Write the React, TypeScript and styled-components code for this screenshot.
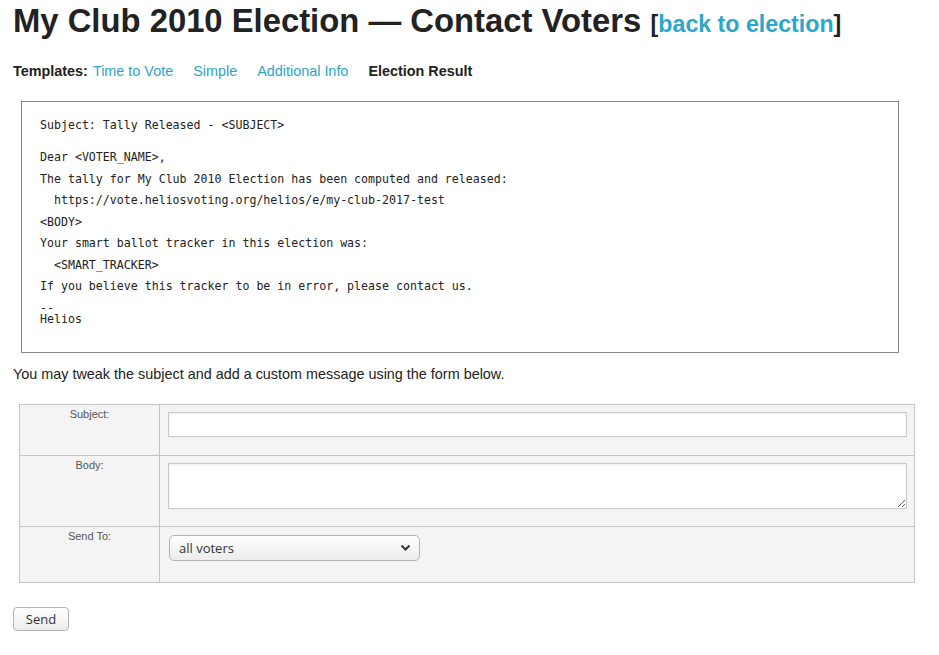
import React from "react";
import styled, { createGlobalStyle } from "styled-components";

const Global = createGlobalStyle`
  html, body { margin: 0; padding: 0; background: #fff; }
  body { font-family: "Liberation Sans", Arial, sans-serif; color: #222; }
`;

const Page = styled.div`
  padding: 0 0 0 13px;
  width: 926px;
  box-sizing: border-box;
`;

const Title = styled.h1`
  margin: 0;
  padding-top: 2px;
  height: 42px;
  font-size: 32.8px;
  line-height: 38px;
  font-weight: bold;
  color: #222;
  white-space: nowrap;
`;

const Back = styled.span`
  font-size: 23.2px;
  margin-left: 3px;
`;

const Link = styled.a`
  color: #2ba6cb;
  text-decoration: none;
`;

const Templates = styled.div`
  display: flex;
  align-items: center;
  gap: 20px;
  margin-top: 19px;
  height: 16px;
  font-size: 14.4px;
  line-height: 16px;
`;

const TplLabel = styled.span`
  display: inline-flex;
  gap: 5px;
`;

const Bold = styled.b`
  font-weight: bold;
  color: #222;
`;

const Preview = styled.pre`
  margin: 22px 0 0 8px;
  width: 878px;
  box-sizing: border-box;
  border: 1px solid #888;
  padding: 18px 18px 28px;
  font-family: "DejaVu Sans Mono", "Liberation Mono", monospace;
  font-size: 11.6px;
  line-height: 10.75px;
  color: #222;
  white-space: pre;
  overflow: hidden;
`;

const Note = styled.p`
  margin: 12px 0 0;
  font-size: 14.4px;
  line-height: 18px;
`;

const Form = styled.div`
  margin: 21px 0 0 6px;
  width: 896px;
  display: grid;
  grid-template-columns: 140px 1fr;
  border: 1px solid #c4c4c4;
  border-bottom: none;
  background: #f4f4f4;
  box-sizing: border-box;
`;

const LabelCell = styled.div<{ $h: number }>`
  height: ${(p) => p.$h}px;
  border-right: 1px solid #c4c4c4;
  border-bottom: 1px solid #c4c4c4;
  text-align: center;
  font-size: 11px;
  color: #555;
  padding-top: 3px;
  box-sizing: border-box;
`;

const FieldCell = styled.div<{ $h: number }>`
  height: ${(p) => p.$h}px;
  border-bottom: 1px solid #c4c4c4;
  padding: 7px 7px 0 8px;
  box-sizing: border-box;
`;

const TextInput = styled.input`
  display: block;
  width: 100%;
  height: 25px;
  box-sizing: border-box;
  border: 1px solid #c8c8c8;
  box-shadow: inset 0 1px 2px rgba(0, 0, 0, 0.08);
  background: #fff;
  margin: 0;
  outline: none;
`;

const TextArea = styled.textarea`
  display: block;
  width: 100%;
  height: 46px;
  box-sizing: border-box;
  border: 1px solid #c8c8c8;
  box-shadow: inset 0 1px 2px rgba(0, 0, 0, 0.08);
  background: #fff;
  margin: 0;
  outline: none;
`;

const SelectWrap = styled.div`
  position: relative;
  width: 251px;
  height: 26px;
  margin: 1px 0 0 1px;
`;

const Select = styled.select`
  appearance: none;
  -webkit-appearance: none;
  width: 100%;
  height: 100%;
  box-sizing: border-box;
  border: 1px solid #b4b4b4;
  border-radius: 5px;
  background: linear-gradient(#ffffff, #ececec);
  padding: 0 0 0 9px;
  font-family: "Open Sans", "DejaVu Sans", sans-serif;
  font-size: 13px;
  color: #333;
  margin: 0;
`;

const Chevron = styled.svg`
  position: absolute;
  right: 9px;
  top: 9px;
  pointer-events: none;
`;

const SendButton = styled.button`
  margin: 24px 0 0;
  width: 56px;
  height: 24px;
  border: 1px solid #b4b4b4;
  border-radius: 4px;
  background: linear-gradient(#ffffff, #ececec);
  font-family: "Open Sans", "DejaVu Sans", sans-serif;
  font-size: 13px;
  color: #333;
  padding: 0;
`;

const previewText = `Subject: Tally Released - <SUBJECT>


Dear <VOTER_NAME>,

The tally for My Club 2010 Election has been computed and released:

  https://vote.heliosvoting.org/helios/e/my-club-2017-test

<BODY>

Your smart ballot tracker in this election was:

  <SMART_TRACKER>

If you believe this tracker to be in error, please contact us.

-- 
Helios`;

export default function App() {
  return (
    <Page>
      <Global />
      <Title>
        My Club 2010 Election — Contact Voters
        <Back>
          {" "}[<Link href="#">back to election</Link>]
        </Back>
      </Title>
      <Templates>
        <TplLabel>
          <Bold>Templates:</Bold>
          <Link href="#">Time to Vote</Link>
        </TplLabel>
        <Link href="#">Simple</Link>
        <Link href="#">Additional Info</Link>
        <Bold>Election Result</Bold>
      </Templates>
      <Preview>{previewText}</Preview>
      <Note>You may tweak the subject and add a custom message using the form below.</Note>
      <Form>
        <LabelCell $h={51}>Subject:</LabelCell>
        <FieldCell $h={51}>
          <TextInput type="text" />
        </FieldCell>
        <LabelCell $h={71}>Body:</LabelCell>
        <FieldCell $h={71}>
          <TextArea />
        </FieldCell>
        <LabelCell $h={56}>Send To:</LabelCell>
        <FieldCell $h={56}>
          <SelectWrap>
            <Select defaultValue="all">
              <option value="all">all voters</option>
            </Select>
            <Chevron width="11" height="8" viewBox="0 0 11 8">
              <path d="M1.5 1.5 L5.5 5.5 L9.5 1.5" fill="none" stroke="#333" strokeWidth="2" />
            </Chevron>
          </SelectWrap>
        </FieldCell>
      </Form>
      <SendButton>Send</SendButton>
    </Page>
  );
}
